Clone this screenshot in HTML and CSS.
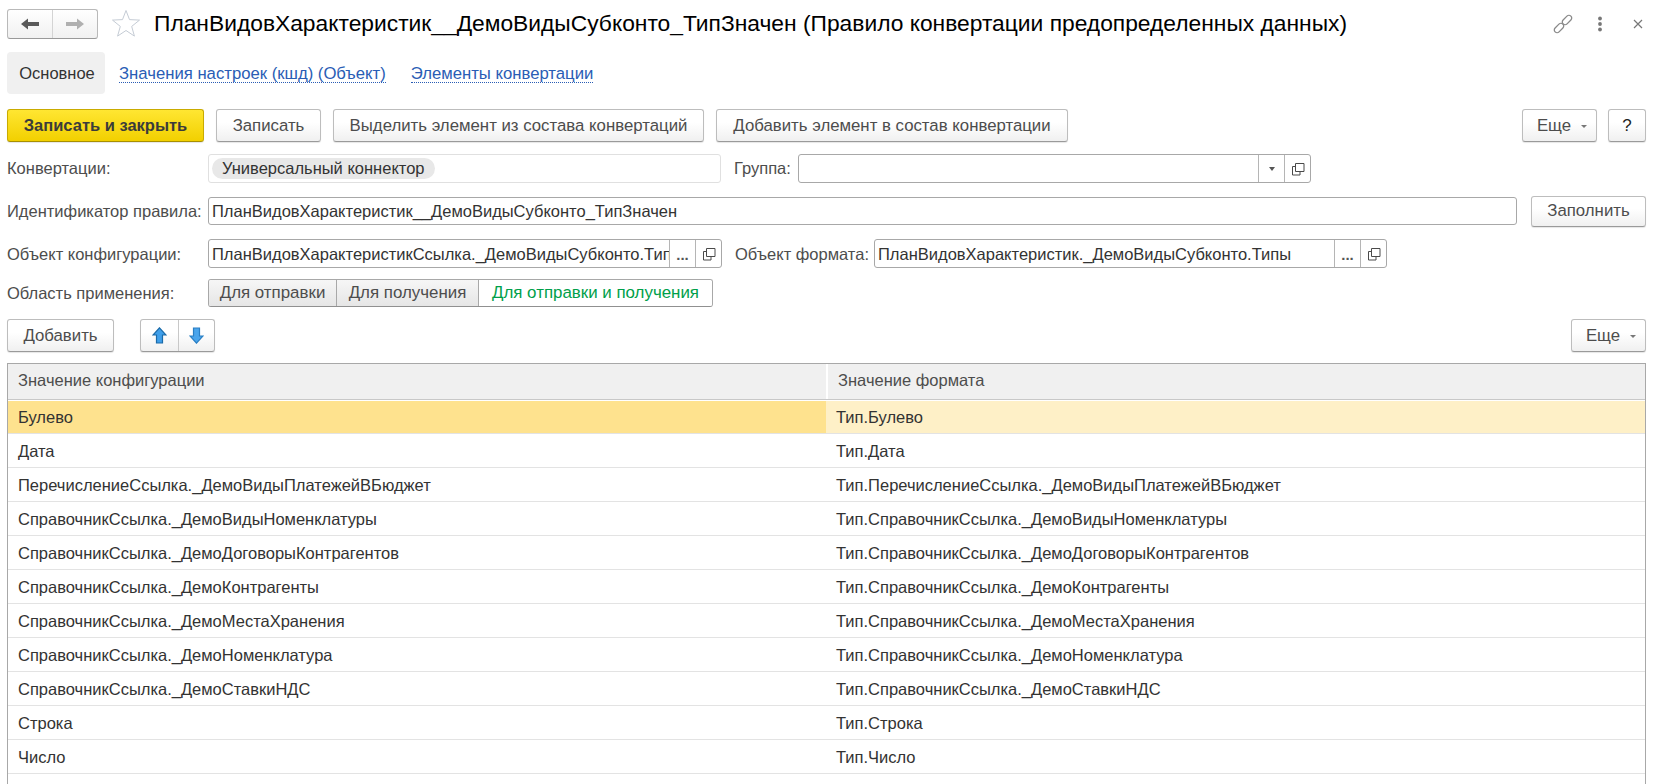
FILE: index.html
```html
<!DOCTYPE html>
<html lang="ru">
<head>
    <meta charset="UTF-8">
    <title>Правило конвертации предопределенных данных</title>
    <link rel="stylesheet" href="styles.css">
</head>
<body>
    <svg class="defs" width="0" height="0">
        <symbol id="open" viewBox="0 0 14 14"><path d="M4.500 1.500h8.500v8h-8.500z M4.500 4.500H1.500v8.500h7.500v-3.500" fill="none" stroke="#4a4a4a" stroke-width="1"/></symbol>
    </svg>
    <header class="titlebar">
        <div class="nav">
            <button class="nav-btn"><svg width="18" height="12" viewBox="0 0 18 12"><path d="M0 6l7-5.500v3.500h11v4H7v3.500z" fill="#5a5a5a"/></svg></button>
            <button class="nav-btn"><svg width="18" height="12" viewBox="0 0 18 12"><path d="M18 6l-7-5.500v3.500H0v4h11v3.500z" fill="#b0b0b0"/></svg></button>
        </div>
        <svg class="star" width="30" height="30" viewBox="0 0 30 30"><path d="M15 1.500l3.500 9.100 10 .5-7.800 6.300 2.700 9.700L15 21.500l-8.400 5.600 2.700-9.700-7.800-6.300 10-.5z" fill="#fff" stroke="#c5ccd5"/></svg>
        <h1 class="title">ПланВидовХарактеристик__ДемоВидыСубконто_ТипЗначен (Правило конвертации предопределенных данных)</h1>
        <div class="window-icons">
            <svg width="20" height="20" viewBox="0 0 20 20"><g fill="none" stroke="#8a8a8a" stroke-width="1.300"><rect x="-5.500" y="-2.800" width="11" height="5.600" rx="2.800" transform="translate(6 14) rotate(-45)"/><rect x="-5.500" y="-2.800" width="11" height="5.600" rx="2.800" transform="translate(14 6) rotate(-45)"/></g></svg>
            <svg width="6" height="16" viewBox="0 0 6 16"><g fill="#777"><circle cx="3" cy="2.500" r="1.900"/><circle cx="3" cy="8" r="1.900"/><circle cx="3" cy="13.500" r="1.900"/></g></svg>
            <svg class="close-icon" width="10" height="10" viewBox="0 0 10 10"><path d="M1 1l8 8M9 1l-8 8" stroke="#777" stroke-width="1.200"/></svg>
        </div>
    </header>

    <nav class="tabs">
        <span class="tab-active">Основное</span>
        <a class="tab-link">Значения настроек (кшд) (Объект)</a>
        <a class="tab-link">Элементы конвертации</a>
    </nav>

    <div class="toolbar toolbar-main">
        <button class="btn btn-primary">Записать и закрыть</button>
        <button class="btn btn-save">Записать</button>
        <button class="btn btn-split">Выделить элемент из состава конвертаций</button>
        <button class="btn btn-add">Добавить элемент в состав конвертации</button>
        <button class="btn btn-more push-right">Еще<i class="caret"></i></button>
        <button class="btn btn-help">?</button>
    </div>

    <div class="form-row row-a">
        <label class="label">Конвертации:</label>
        <div class="field field-pills"><span class="pill">Универсальный коннектор</span></div>
        <label class="label label-group">Группа:</label>
        <div class="field field-group">
            <span class="field-text"></span>
            <span class="field-btn"><i class="caret caret-dark"></i></span>
            <span class="field-btn"><svg width="14" height="14"><use href="#open"/></svg></span>
        </div>
    </div>

    <div class="form-row row-b">
        <label class="label">Идентификатор правила:</label>
        <div class="field field-id"><span class="field-text">ПланВидовХарактеристик__ДемоВидыСубконто_ТипЗначен</span></div>
        <button class="btn btn-fill">Заполнить</button>
    </div>

    <div class="form-row row-c">
        <label class="label">Объект конфигурации:</label>
        <div class="field field-object">
            <span class="field-text">ПланВидовХарактеристикСсылка._ДемоВидыСубконто.Типы</span>
            <span class="field-btn dots">...</span>
            <span class="field-btn"><svg width="14" height="14"><use href="#open"/></svg></span>
        </div>
        <label class="label label-format">Объект формата:</label>
        <div class="field field-format">
            <span class="field-text">ПланВидовХарактеристик._ДемоВидыСубконто.Типы</span>
            <span class="field-btn dots">...</span>
            <span class="field-btn"><svg width="14" height="14"><use href="#open"/></svg></span>
        </div>
    </div>

    <div class="form-row row-d">
        <label class="label">Область применения:</label>
        <div class="switch">
            <span class="switch-item sw-1">Для отправки</span>
            <span class="switch-item sw-2">Для получения</span>
            <span class="switch-item sw-3 is-on">Для отправки и получения</span>
        </div>
    </div>

    <div class="toolbar toolbar-table">
        <button class="btn btn-append">Добавить</button>
        <div class="move-group">
            <button class="move-btn"><svg width="15" height="17" viewBox="0 0 15 17"><path d="M7.500 .8l6.500 7.200h-3.500v8h-6v-8H1z" fill="#3f9fea" stroke="#1b6aa8" stroke-width="1.200"/></svg></button>
            <button class="move-btn"><svg width="15" height="17" viewBox="0 0 15 17"><path d="M7.500 16.200l6.500-7.200h-3.500v-8h-6v8H1z" fill="#4aa5ec" stroke="#2a7fc4" stroke-width="1.200"/></svg></button>
        </div>
        <button class="btn btn-more push-right">Еще<i class="caret"></i></button>
    </div>

    <div class="grid">
        <div class="grid-head"><div class="cell">Значение конфигурации</div><div class="cell">Значение формата</div></div>
        <div class="grid-row is-current"><div class="cell">Булево</div><div class="cell">Тип.Булево</div></div>
        <div class="grid-row"><div class="cell">Дата</div><div class="cell">Тип.Дата</div></div>
        <div class="grid-row"><div class="cell">ПеречислениеСсылка._ДемоВидыПлатежейВБюджет</div><div class="cell">Тип.ПеречислениеСсылка._ДемоВидыПлатежейВБюджет</div></div>
        <div class="grid-row"><div class="cell">СправочникСсылка._ДемоВидыНоменклатуры</div><div class="cell">Тип.СправочникСсылка._ДемоВидыНоменклатуры</div></div>
        <div class="grid-row"><div class="cell">СправочникСсылка._ДемоДоговорыКонтрагентов</div><div class="cell">Тип.СправочникСсылка._ДемоДоговорыКонтрагентов</div></div>
        <div class="grid-row"><div class="cell">СправочникСсылка._ДемоКонтрагенты</div><div class="cell">Тип.СправочникСсылка._ДемоКонтрагенты</div></div>
        <div class="grid-row"><div class="cell">СправочникСсылка._ДемоМестаХранения</div><div class="cell">Тип.СправочникСсылка._ДемоМестаХранения</div></div>
        <div class="grid-row"><div class="cell">СправочникСсылка._ДемоНоменклатура</div><div class="cell">Тип.СправочникСсылка._ДемоНоменклатура</div></div>
        <div class="grid-row"><div class="cell">СправочникСсылка._ДемоСтавкиНДС</div><div class="cell">Тип.СправочникСсылка._ДемоСтавкиНДС</div></div>
        <div class="grid-row"><div class="cell">Строка</div><div class="cell">Тип.Строка</div></div>
        <div class="grid-row"><div class="cell">Число</div><div class="cell">Тип.Число</div></div>
    </div>
</body>
</html>
```
FILE: styles.css
```css
* { box-sizing: border-box; }
html, body { height: 100%; }
body { margin: 0; padding: 9px 8px 0 7px; overflow: hidden; background: #fff; color: #4d4d4d; font: 16.500px "Liberation Sans", Arial, sans-serif; }
.defs { position: absolute; }
button { font: inherit; color: inherit; }

.titlebar { display: flex; align-items: center; height: 30px; }
.nav { display: flex; width: 91px; height: 30px; border: 1px solid #b9b9b9; border-bottom-color: #999; border-radius: 3px; background: linear-gradient(#fff, #f1f1f1); }
.nav-btn { flex: 1; padding: 0; border: 0; background: none; display: flex; align-items: center; justify-content: center; }
.nav-btn + .nav-btn { border-left: 1px solid #d4d4d4; }
.star { margin-left: 13px; }
.title { margin: 0 0 2px 13px; font-size: 22.800px; font-weight: normal; color: #000; white-space: nowrap; }
.window-icons { margin-left: auto; display: flex; align-items: center; gap: 24px; padding-right: 3px; }
.close-icon { margin-left: 6px; }

.tabs { display: flex; align-items: center; height: 42px; margin-top: 13px; }
.tab-active { display: flex; align-items: center; justify-content: center; width: 98px; height: 42px; padding-left: 2px; border-radius: 4px; background: #f0f0f0; color: #333; }
.tab-link { margin: 2px 0 0 14px; color: #2a5db5; border-bottom: 1px dotted #2a5db5; line-height: 17px; font-size: 16.700px; }
.tab-link + .tab-link { margin-left: 25px; }

.toolbar { display: flex; height: 33px; }
.toolbar-main { margin-top: 15px; }
.toolbar-table { margin-top: 12px; }
.push-right { margin-left: auto; }

.btn { height: 33px; padding: 0; border: 1px solid #bdbdbd; border-bottom-color: #9a9a9a; border-radius: 3px; background: linear-gradient(#fff 40%, #f0f0f0); box-shadow: 0 1px 1px rgba(0, 0, 0, .1); white-space: nowrap; font-size: 16.800px; }
.btn-primary { width: 197px; background: linear-gradient(#ffe632, #f2d000); border-color: #c9ab00; border-bottom-color: #a88f00; color: #3b3b3b; font-weight: bold; font-size: 16.500px; }
.btn-save { width: 105px; margin-left: 12px; }
.btn-split { width: 371px; margin-left: 12px; }
.btn-add { width: 352px; margin-left: 12px; }
.btn-more { width: 75px; padding-left: 5px; }
.btn-help { width: 38px; margin-left: 11px; color: #222; font-size: 17px; }
.btn-fill { width: 115px; height: 31px; margin-left: 14px; }
.btn-append { width: 107px; }
.caret { display: inline-block; margin-left: 10px; vertical-align: middle; border: 3px solid transparent; border-top: 3px solid #777; border-bottom: 0; }
.caret-dark { margin: 0; border-top-color: #555; border-width: 4px 3px 0; }

.form-row { display: flex; align-items: center; height: 29px; }
.row-a { margin-top: 12px; }
.row-b { margin-top: 14px; height: 28px; }
.row-c { margin-top: 14px; }
.row-c .field-text, .row-c > .label { padding-top: 1px; }
.row-d { margin-top: 11px; height: 28px; }
.label { flex: none; width: 201px; white-space: nowrap; }
.label-group { width: 64px; margin-left: 13px; }
.label-format { width: 139px; margin-left: 13px; }

.field { display: flex; align-items: center; height: 100%; border: 1px solid #a8a8a8; border-radius: 3px; background: #fff; color: #333; overflow: hidden; }
.field-text { flex: 1; min-width: 0; padding-left: 3px; white-space: nowrap; overflow: hidden; }
.field-btn { flex: none; display: flex; align-items: center; justify-content: center; width: 26px; height: 100%; border-left: 1px solid #b5b5b5; }
.dots { align-items: flex-end; padding-bottom: 8px; line-height: 8px; font-weight: bold; color: #555; font-size: 15px; }
.field-pills { width: 513px; padding-left: 3px; border-color: #e0e0e0; }
.pill { padding: 0 10px; height: 21px; line-height: 21px; border-radius: 11px; background: #e8e8e8; }
.field-group { width: 513px; }
.field-id { width: 1309px; }
.field-object { width: 514px; }
.field-format { width: 513px; }

.switch { display: flex; width: 505px; height: 100%; border: 1px solid #a8a8a8; border-bottom-color: #909090; border-radius: 3px; overflow: hidden; font-size: 16.900px; }
.switch-item { display: flex; align-items: center; justify-content: center; background: linear-gradient(#f6f6f6, #e6e6e6); border-left: 1px solid #a8a8a8; }
.sw-1 { width: 127px; border-left: 0; }
.sw-2 { width: 142px; }
.sw-3 { flex: 1; }
.is-on { background: #fff; color: #00a04a; }

.move-group { display: flex; margin-left: 26px; width: 75px; height: 33px; border: 1px solid #bdbdbd; border-bottom-color: #9a9a9a; border-radius: 3px; background: linear-gradient(#fff 40%, #f0f0f0); box-shadow: 0 1px 1px rgba(0, 0, 0, .1); }
.move-btn { flex: 1; padding: 0; border: 0; background: none; display: flex; align-items: center; justify-content: center; }
.move-btn:first-child { flex: none; width: 37px; }
.move-btn + .move-btn { border-left: 1px solid #c8c8c8; }

.grid { height: 440px; margin-top: 11px; border: 1px solid #a8a8a8; border-bottom: 0; color: #333; }
.grid-head, .grid-row { display: grid; grid-template-columns: 818px 1fr; }
.grid-head { height: 36px; background: #f0f0f0; border-bottom: 1px solid #c8c8c8; color: #4d4d4d; }
.grid-head .cell { padding-bottom: 2px; }
.grid-head .cell + .cell { border-left: 2px solid #fff; }
.grid-row { height: 34px; border-bottom: 1px solid #e3e3e3; }
.grid-row .cell { padding-top: 1px; }
.grid-row:nth-child(2) { margin-top: 1px; height: 33px; }
.cell { display: flex; align-items: center; padding-left: 10px; white-space: nowrap; overflow: hidden; }
.is-current .cell { background: #fef0c7; }
.is-current .cell:first-child { background: #fee28e; }
```
